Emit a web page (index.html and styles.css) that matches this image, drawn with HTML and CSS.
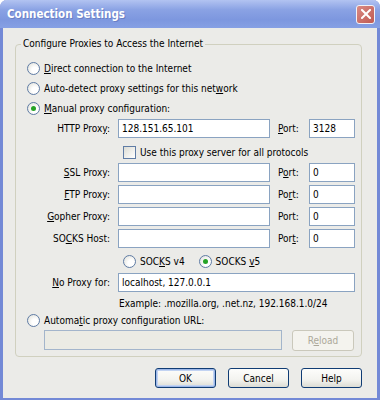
FILE: index.html
```html
<!DOCTYPE html>
<html lang="en">
<head>
    <meta charset="UTF-8">
    <title>Connection Settings</title>
    <link rel="stylesheet" href="styles.css">
</head>
<body>
    <div class="window">
        <div class="titlebar">
            <span class="title">Connection Settings</span>
            <span class="close">
                <svg width="10" height="10" viewBox="0 0 10 10"><path d="M1 1 L9 9 M9 1 L1 9" stroke="#fff" stroke-width="2" stroke-linecap="square"/></svg>
            </span>
        </div>

        <div class="content">
            <fieldset class="group">
                <legend>Configure Proxies to Access the Internet</legend>

                <div class="radio-row first"><span class="radio"></span><span><u>D</u>irect connection to the Internet</span></div>
                <div class="radio-row"><span class="radio"></span><span>Auto-detect proxy settings for this net<u>w</u>ork</span></div>
                <div class="radio-row"><span class="radio checked"></span><span><u>M</u>anual proxy configuration:</span></div>

                <div class="proxy-grid">
                    <span class="lbl">HTTP Prox<u>y</u>:</span>
                    <input class="field" type="text" value="128.151.65.101">
                    <span class="plbl"><u>P</u>ort:</span>
                    <input class="field" type="text" value="3128">

                    <div class="check-row"><span class="check"></span><span>Use this proxy server for all protocols</span></div>

                    <span class="lbl"><u>S</u>SL Proxy:</span>
                    <input class="field" type="text">
                    <span class="plbl">P<u>o</u>rt:</span>
                    <input class="field" type="text" value="0">

                    <span class="lbl"><u>F</u>TP Proxy:</span>
                    <input class="field" type="text">
                    <span class="plbl">Po<u>r</u>t:</span>
                    <input class="field" type="text" value="0">

                    <span class="lbl"><u>G</u>opher Proxy:</span>
                    <input class="field" type="text">
                    <span class="plbl">Port:</span>
                    <input class="field" type="text" value="0">

                    <span class="lbl">SO<u>C</u>KS Host:</span>
                    <input class="field" type="text">
                    <span class="plbl">Por<u>t</u>:</span>
                    <input class="field" type="text" value="0">

                    <div class="socks-row">
                        <span class="radio-inline"><span class="radio"></span><span>SOC<u>K</u>S v4</span></span>
                        <span class="radio-inline"><span class="radio checked"></span><span>SOCKS <u>v</u>5</span></span>
                    </div>

                    <span class="lbl"><u>N</u>o Proxy for:</span>
                    <input class="field wide" type="text" value="localhost, 127.0.0.1">

                    <div class="example">Example: .mozilla.org, .net.nz, 192.168.1.0/24</div>
                </div>

                <div class="radio-row auto"><span class="radio"></span><span>Automa<u>t</u>ic proxy configuration URL:</span></div>
                <div class="url-row">
                    <input class="field url" type="text" disabled>
                    <button class="btn disabled" disabled>R<u>e</u>load</button>
                </div>
            </fieldset>

            <div class="buttons">
                <button class="btn default">OK</button>
                <button class="btn">Cancel</button>
                <button class="btn">Help</button>
            </div>
        </div>
    </div>
</body>
</html>
```

FILE: styles.css
```css
body {
    margin: 0;
    background: #fff;
    font-family: "DejaVu Sans Condensed", "DejaVu Sans", sans-serif;
    font-size: 10px;
    color: #000;
}
.window {
    width: 380px;
    box-sizing: border-box;
    background: #ebebe8;
    border: 3px solid #7389d6;
    border-top: none;
    border-radius: 7px 7px 0 0;
}
.titlebar {
    height: 28px;
    margin: 0 -3px;
    border-radius: 7px 7px 0 0;
    background: linear-gradient(#b2c3f1, #8aa2e4 35%, #7d97df 70%, #86a0e4);
    display: flex;
    align-items: center;
    justify-content: space-between;
    padding: 0 5px 0 7px;
}
.title {
    color: #fff;
    font-family: "DejaVu Sans Condensed", "DejaVu Sans", sans-serif;
    font-weight: bold;
    font-size: 11.5px;
    text-shadow: 1px 1px 0 #6a7fc4;
}
.close {
    width: 17px;
    height: 17px;
    border: 1px solid #f2f2f6;
    border-radius: 3px;
    background: linear-gradient(135deg, #d98a84, #c05a52);
    display: flex;
    align-items: center;
    justify-content: center;
}
.content {
    padding: 9px 15px 10px 12px;
}
.group {
    margin: 0;
    padding: 0 0 6px 0;
    border: 1px solid #d0d0bf;
    border-radius: 4px;
}
.group legend {
    margin-left: 5px;
    padding: 0 2px;
    line-height: 14px;
}
.radio-row {
    display: flex;
    align-items: center;
    gap: 4px;
    height: 20px;
    padding-left: 11px;
}
.radio-row.first {
    margin-top: 7px;
}
.radio {
    width: 11px;
    height: 11px;
    border: 1px solid #5f7ca5;
    border-radius: 50%;
    background: radial-gradient(circle at 65% 65%, #fff 30%, #dcdcd4 100%);
    position: relative;
    flex: none;
}
.radio.checked::after {
    content: "";
    position: absolute;
    left: 3px;
    top: 3px;
    width: 5px;
    height: 5px;
    border-radius: 50%;
    background: #26a326;
}
.proxy-grid {
    display: grid;
    grid-template-columns: 94px 152px 23px 46px;
    column-gap: 8px;
    row-gap: 3px;
    grid-auto-rows: 19px;
    align-items: center;
    margin-top: 1px;
}
.lbl {
    text-align: right;
    white-space: nowrap;
}
.plbl {
    white-space: nowrap;
}
.field {
    box-sizing: border-box;
    height: 19px;
    width: 100%;
    margin: 0;
    padding: 0 3px;
    border: 1px solid #8aa3c1;
    background: #fff;
    font: inherit;
    color: #000;
    outline: none;
}
.field.wide {
    grid-column: 2 / 5;
}
.check-row {
    grid-column: 2 / 5;
    display: flex;
    align-items: center;
    gap: 4px;
    padding-left: 5px;
    margin: 1px 0 -2px 0;
}
.check {
    width: 11px;
    height: 11px;
    border: 1px solid #5f7ca5;
    background: linear-gradient(135deg, #dcdcd4, #fff);
    flex: none;
}
.socks-row {
    grid-column: 2 / 5;
    display: flex;
    gap: 14px;
    padding-left: 5px;
    margin-top: 1px;
}
.radio-inline {
    display: flex;
    align-items: center;
    gap: 4px;
}
.example {
    grid-column: 2 / 5;
    padding-left: 1px;
    margin-top: -3px;
}
.radio-row.auto {
    margin-top: -4px;
}
.url-row {
    display: flex;
    align-items: center;
    gap: 10px;
    padding-left: 28px;
    height: 20px;
}
.field.url {
    width: 238px;
    height: 20px;
    background: #ebebe4;
    border-color: #a3b5cb;
}
.btn {
    box-sizing: border-box;
    height: 20px;
    border: 1px solid #103c74;
    border-radius: 3px;
    background: linear-gradient(#fdfdfb, #f3f3ef 60%, #dcdcd4);
    font: inherit;
    color: #000;
    padding: 0;
}
.btn.disabled {
    width: 62px;
    height: 21px;
    border-color: #cac8bb;
    background: #f4f3ee;
    color: #aca899;
}
.buttons {
    display: flex;
    justify-content: flex-end;
    gap: 12px;
    margin-top: 11px;
}
.buttons .btn {
    width: 61px;
}
.buttons .btn.default {
    box-shadow: inset 0 0 0 1px #9cb7e8, inset 0 0 0 2px #c2d3f2;
}
```
